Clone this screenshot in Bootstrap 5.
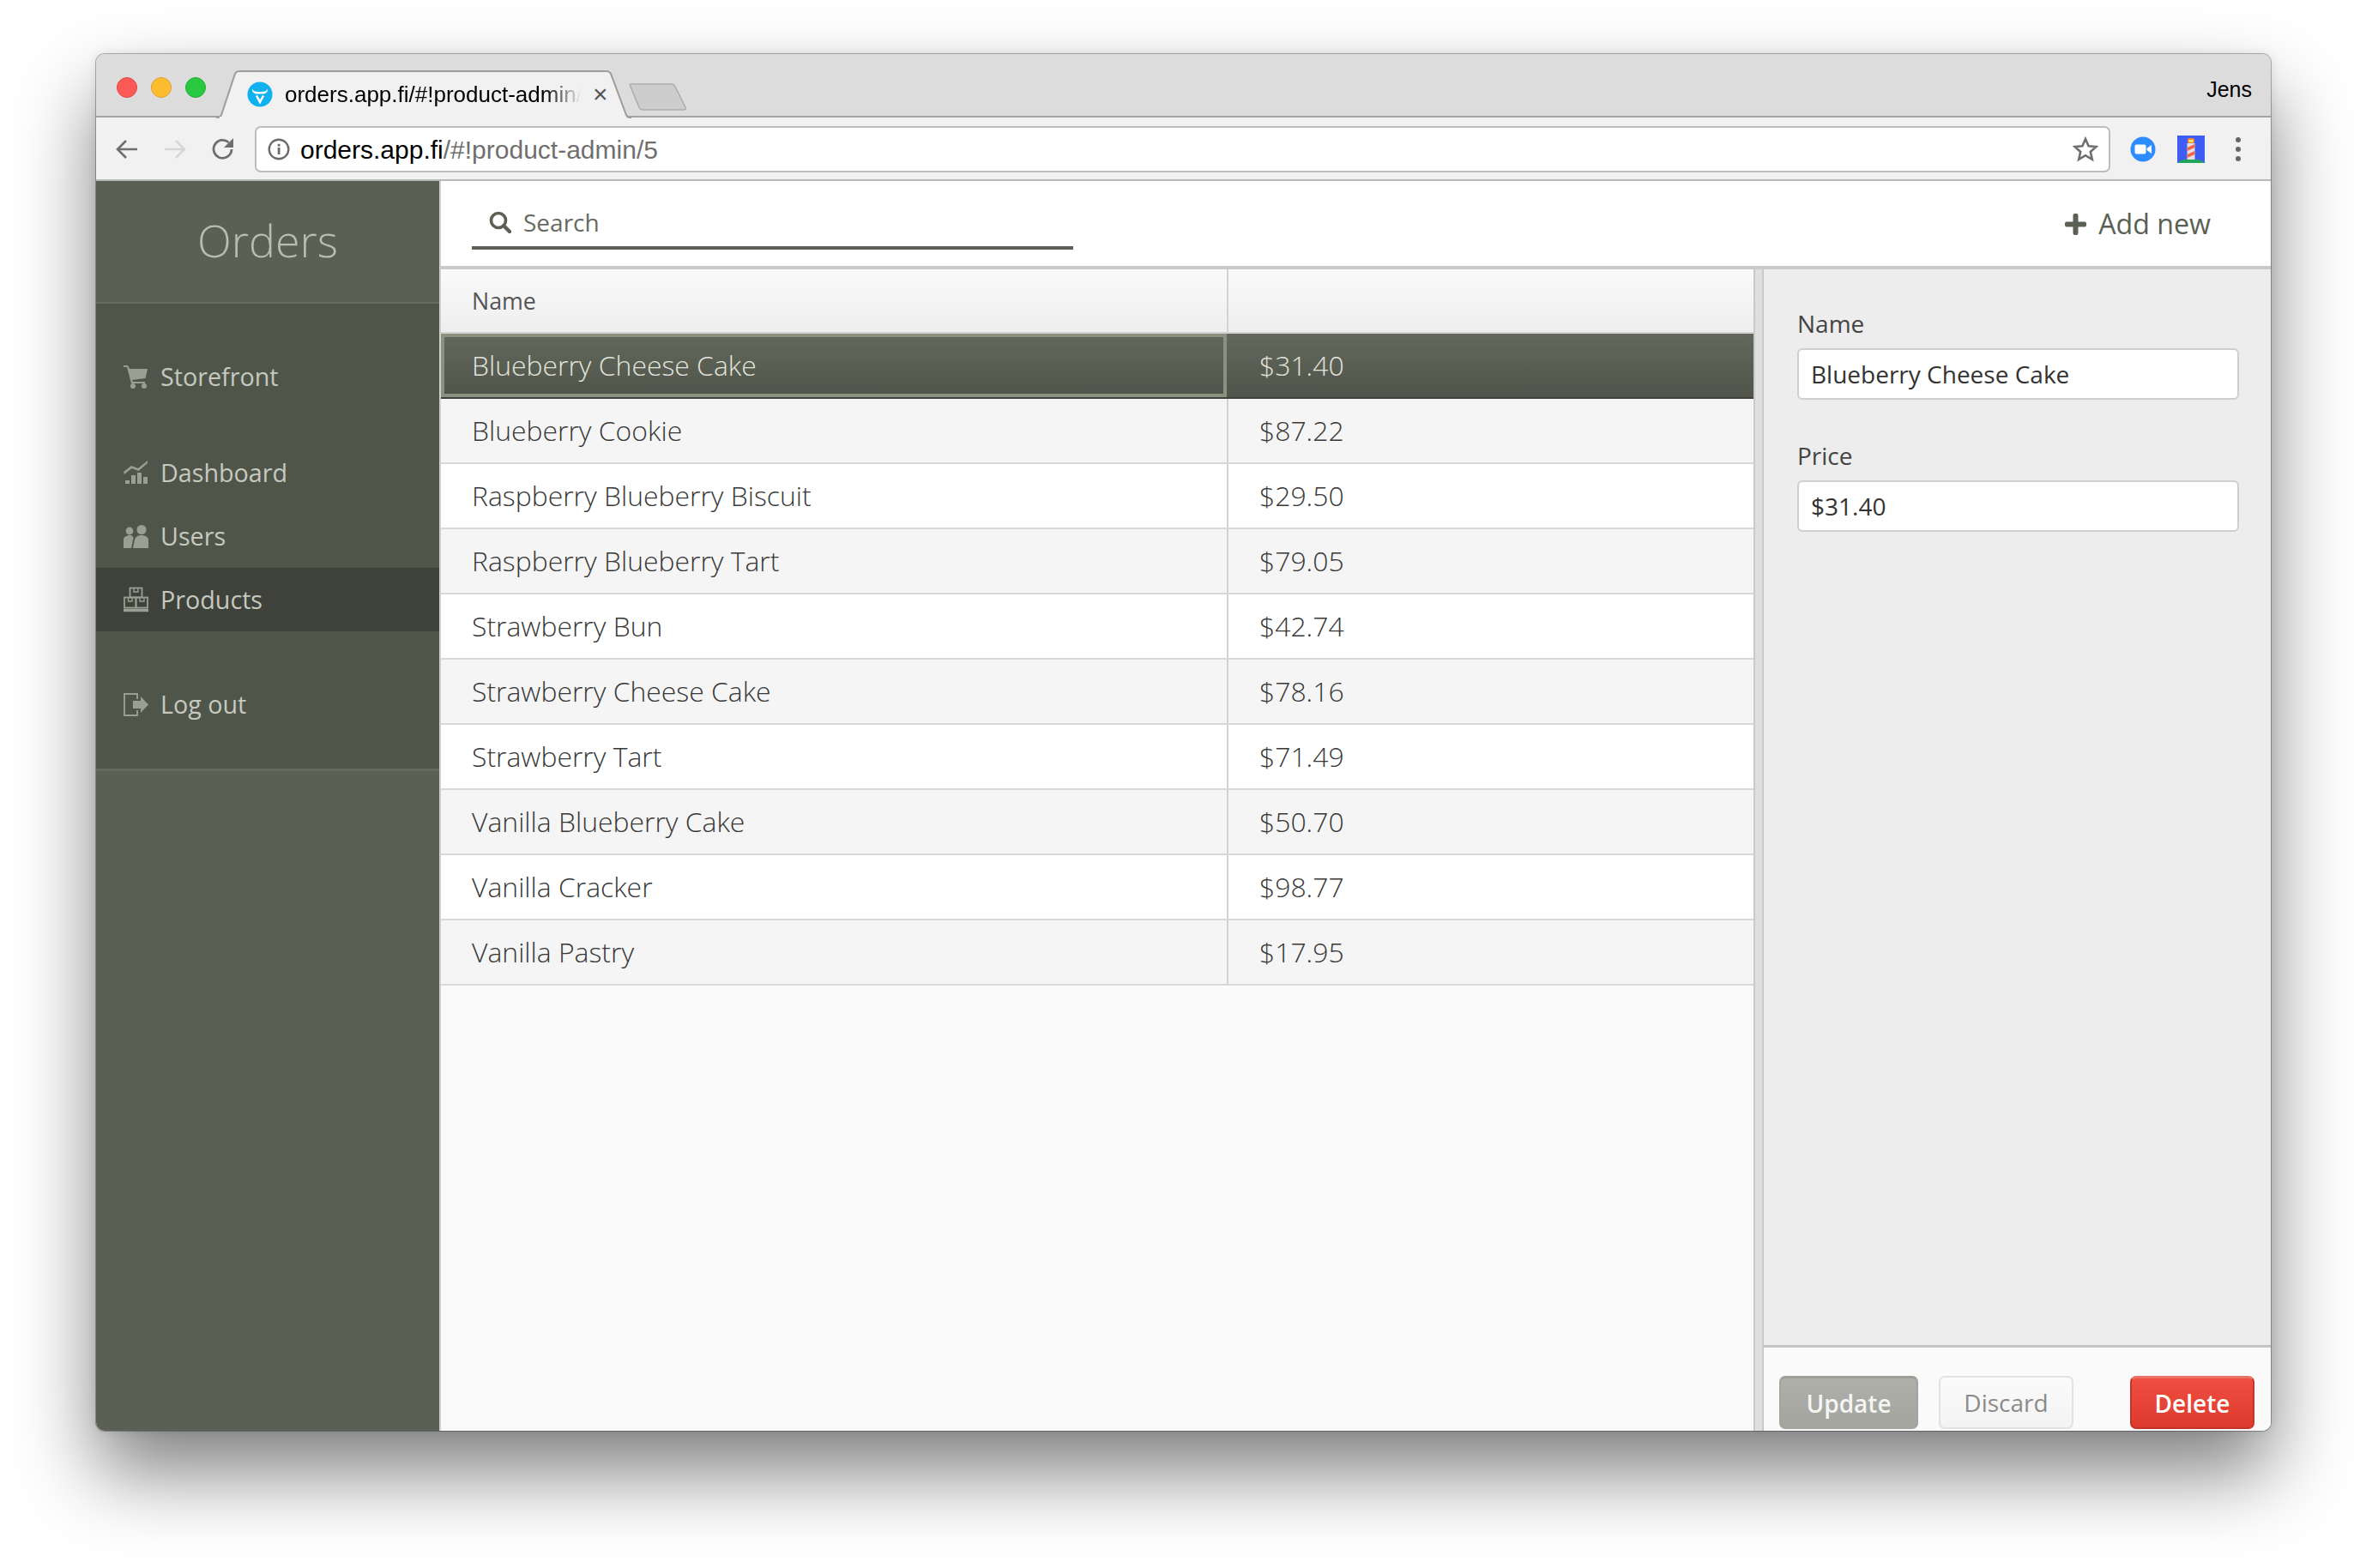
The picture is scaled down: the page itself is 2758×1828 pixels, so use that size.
<!DOCTYPE html>
<html lang="en">
<head>
<meta charset="utf-8">
<title>Orders</title>
<link rel="stylesheet" href="https://cdn.jsdelivr.net/npm/bootstrap@5.3.0/dist/css/bootstrap.min.css">
<style>
html,body{height:100%;background:#fff;overflow:hidden}
body{padding:63px 0 0 112px;font-family:"Open Sans",sans-serif}
.appwin{width:2535px;height:1605px;border-radius:10px;overflow:hidden;background:#fafafa;box-shadow:0 0 0 1px rgba(0,0,0,.28),0 0 12px rgba(0,0,0,.1),0 48px 92px rgba(0,0,0,.5)}
.chrome-font{font-family:"Liberation Sans",Arial,sans-serif}
.tabbar{height:74px;background:#dcdcdc;border-bottom:2px solid #a3a3a3;padding-left:24px}
.light{width:24px;height:24px;border-radius:50%;margin-right:16px;margin-top:5px}
.l-r{background:#fc5a56;border:1px solid #e2453f}.l-y{background:#fdbc2f;border:1px solid #e0a028}.l-g{background:#28c840;border:1px solid #22ab33}
.tabshape{position:relative;width:484px;height:56px;margin-left:12px;margin-top:22px;flex:none}
.tabshape svg{position:absolute;left:0;top:0}
.tabinner{position:relative;padding:0 0 0 36px;height:56px}
.tabtext{font-size:26px;color:#000;width:345px;margin-left:14px;white-space:nowrap;overflow:hidden;-webkit-mask-image:linear-gradient(90deg,#000 88%,transparent 100%);mask-image:linear-gradient(90deg,#000 88%,transparent 100%)}
.tabclose{font-size:30px;color:#555;margin-left:14px;line-height:1}
.newtab{margin-left:-3px;margin-top:27px;flex:none}
.usern{font-size:25px;color:#000;margin-left:auto;margin-right:22px;margin-top:11px}
.toolbar{height:74px;background:#f1f1f1;border-bottom:2px solid #b9b9b9;padding:2px 0 0 22px}
.navico{width:28px;height:28px;margin-right:28px;flex:none}
.addr{width:2163px;height:54px;background:#fff;border:2px solid #bdbdbd;border-radius:7px;margin-left:-5px;padding:0 12px 0 13px;font-size:30px;flex:none}
.addr .dom{color:#000;margin-left:12px}.addr .rest{color:#6f6f6f}
.extico{flex:none}
.appbody{height:1457px}
.sidebox{width:400px;background:#5b6055;flex:none}
.brandbox{height:143px;border-bottom:2px solid #686d5f;padding-top:34px;text-align:center;font-weight:300;font-size:52px;line-height:70px;color:#b9bcb3}
.navbox{background:#50554a;border-bottom:3px solid #656a5c;padding:48px 0 38px}
.sideitem{display:flex;align-items:center;height:74px;padding-left:32px;color:#c6c9c0;font-size:28.7px;text-decoration:none}
.sideitem:hover{color:#c6c9c0}
.sideitem svg{width:29px;height:30px;margin-right:14px;flex:none}
.sideitem.on{background:#3f423a}
.gap-a{margin-top:38px}.gap-b{margin-top:48px}
.mainbox{border-left:2px solid #cfcfcf;min-width:0}
.topstrip{height:103px;background:#fff;border-bottom:4px solid #c9c9c9;padding:0 70px 0 36px}
.searchbox{width:701px;height:62px;border-bottom:4px solid #5b6055;margin-top:-1px;padding:2px 0 0 20px;font-size:28px;color:#666b60}
.searchbox svg{margin-right:14px}
.addnew{font-size:32.2px;color:#5b6055;margin-top:2px}
.addnew svg{margin-right:14px}
.gridpane{width:1530px;flex:none;background:#fafafa}
.gridt.table{width:1530px;table-layout:fixed;margin:0;border-collapse:separate;border-spacing:0;--bs-table-bg:transparent}
.gridt.table>thead>tr>th{height:75px;padding:2px 0 0 36px;font-weight:400;font-size:26.8px;color:#555;background:linear-gradient(#fafafa,#eeeeee);border:0;border-bottom:2px solid #d3d3d3;box-shadow:none;vertical-align:middle}
.gridt.table>thead>tr>th+th{border-left:2px solid #d3d3d3}
.gridt.table>tbody>tr>td{height:76px;padding:0 0 0 36px;font-weight:300;font-size:31.9px;color:#383838;border:0;border-bottom:2px solid #d8d8d8;box-shadow:none;vertical-align:middle;background:#fff}
.gridt.table>tbody>tr>td+td{border-left:2px solid #d3d3d3}
.gridt.table>tbody>tr:nth-child(even)>td{background:#f5f5f5}
.gridt.table>tbody>tr.picked>td{background:linear-gradient(#63685c,#50544a);color:#e2e4de;border-bottom:2px solid #3f423a}
.gridt.table>tbody>tr.picked>td:first-child{box-shadow:inset 0 0 0 4px #8b917f}
.gridt.table>tbody>tr.picked>td+td{border-left:0;padding-left:38px}
.splitter{width:12px;flex:none;background:#dfdfdf;border-left:2px solid #c9c9c9;border-right:2px solid #c9c9c9}
.editpane{background:#ededed;flex:1;min-width:0}
.editform{flex:1;padding:45px 37px 0 39px;color:#444}
.flabel{font-size:28px;line-height:36px;margin-bottom:11px;color:#444}
.finput.form-control{height:60px;font-size:28px;color:#333;padding:0 14px;border:2px solid #cfcfcf;border-radius:6px;margin-bottom:47px;font-family:"Open Sans",sans-serif}
.editfoot{height:100px;background:#fafafa;border-top:3px solid #c4c4c4;padding:33px 19px 0 18px}
.pbtn.btn{height:62px;font-size:28px;line-height:1;padding:0;border-radius:7px;color:#fff}
.b-up.btn{width:162px;font-weight:600;background:linear-gradient(#adafa9,#a3a59e);border:2px solid #a2a49d;border-top:3px solid #9c9e97;opacity:1;color:#f5f5f3}
.b-di.btn{width:157px;margin-left:24px;background:linear-gradient(#fbfbfb,#f3f3f3);border:2px solid #e2e2e2;color:#8a8a8a;opacity:1}
.b-de.btn{width:145px;font-weight:600;margin-left:auto;background:linear-gradient(#f04e40,#dd3a2d);border:2px solid #c2352a;border-top:3px solid #e87268}
</style>
</head>
<body>
<div class="appwin d-flex flex-column">
  <div class="tabbar d-flex align-items-center chrome-font">
    <span class="light l-r"></span><span class="light l-y"></span><span class="light l-g" style="margin-right:0"></span>
    <div class="tabshape">
      <svg width="484" height="56" viewBox="0 0 484 56"><path d="M0 55 H2 C4 55 5 54 6 52 L22 4 C23 2 24 1 27 1 H455 C458 1 459 2 460 4 L478 52 C479 54 480 55 482 55 H484" fill="#f1f1f1" stroke="#9d9d9d" stroke-width="2"/><rect x="4" y="54" width="474" height="2" fill="#f1f1f1"/></svg>
      <div class="tabinner d-flex align-items-center">
        <svg style="position:static;flex:none" width="30" height="30" viewBox="0 0 30 30"><circle cx="15" cy="15" r="14.5" fill="#0fb1ee"/><path d="M6 8.5 C7 11 9 12 13 12 H17 C21 12 23 11 24 8.5 C24.5 12 22 14.5 18.5 14.5 H11.5 C8 14.5 5.5 12 6 8.5Z" fill="#fff"/><path d="M11 16.5 L15 24 L19 16.5" fill="none" stroke="#fff" stroke-width="2.6"/></svg>
        <span class="tabtext">orders.app.fi/#!product-admin/</span>
        <span class="tabclose">×</span>
      </div>
    </div>
    <svg class="newtab" width="68" height="34" viewBox="0 0 68 34"><path d="M3 2 H50 C52 2 53 3 54 5 L66 29 C67 31 66 32 64 32 H16 C14 32 13 31 12 29 L2 5 C1 3 1 2 3 2Z" fill="#cdcdcd" stroke="#adadad" stroke-width="1.6"/></svg>
    <span class="usern">Jens</span>
  </div>
  <div class="toolbar d-flex align-items-center chrome-font">
    <svg class="navico" viewBox="0 0 28 28"><path d="M26 14 H4 M13 4 L3 14 L13 24" fill="none" stroke="#6e6e6e" stroke-width="2.6"/></svg>
    <svg class="navico" viewBox="0 0 28 28"><path d="M2 14 H24 M15 4 L25 14 L15 24" fill="none" stroke="#d6d6d6" stroke-width="2.6"/></svg>
    <svg class="navico" viewBox="0 0 28 28"><path d="M24 14 A10.5 10.5 0 1 1 20.5 6" fill="none" stroke="#6e6e6e" stroke-width="2.8"/><path d="M26 1 V12 H15Z" fill="#6e6e6e"/></svg>
    <div class="addr d-flex align-items-center">
      <svg width="26" height="26" viewBox="0 0 26 26" style="flex:none"><circle cx="13" cy="13" r="11.3" fill="none" stroke="#6a6a6a" stroke-width="2.4"/><rect x="11.7" y="11" width="2.8" height="8" fill="#6a6a6a"/><rect x="11.7" y="6.8" width="2.8" height="2.8" fill="#6a6a6a"/></svg>
      <span class="dom">orders.app.fi</span><span class="rest">/#!product-admin/5</span>
      <svg class="ms-auto" width="30" height="30" viewBox="0 0 30 30"><path d="M15 3 L18.6 11.2 L27.5 12 L20.8 18 L22.8 26.8 L15 22.2 L7.2 26.8 L9.2 18 L2.5 12 L11.4 11.2Z" fill="none" stroke="#6e6e6e" stroke-width="2.6"/></svg>
    </div>
    <svg class="extico" style="margin-left:23px" width="30" height="30" viewBox="0 0 30 30"><circle cx="15" cy="15" r="14.5" fill="#2d8cff"/><rect x="5.5" y="9.5" width="13" height="11" rx="2" fill="#fff"/><path d="M19.5 14 L25 10 V20 L19.5 16Z" fill="#fff"/></svg>
    <svg class="extico" style="margin-left:25px" width="32" height="32" viewBox="0 0 32 32"><rect width="32" height="32" fill="#3f5cf5"/><ellipse cx="16" cy="32" rx="15" ry="4.5" fill="#1ea55a"/><rect x="11.5" y="9" width="9" height="19" fill="#e8d8e8"/><path d="M11.5 14 L20.5 10 V14 L11.5 18Z M11.5 22 L20.5 18 V22 L11.5 26Z" fill="#f0683a"/><rect x="12" y="3" width="8" height="6" rx="2" fill="#f4862a"/><rect x="13.5" y="5" width="5" height="3" fill="#fde16a"/></svg>
    <svg class="extico" style="margin-left:35px" width="8" height="30" viewBox="0 0 8 30"><circle cx="4" cy="4" r="3" fill="#666"/><circle cx="4" cy="15" r="3" fill="#666"/><circle cx="4" cy="26" r="3" fill="#666"/></svg>
  </div>
  <div class="appbody d-flex">
    <aside class="sidebox d-flex flex-column">
      <div class="brandbox">Orders</div>
      <nav class="navbox">
        <a class="sideitem" href="#"><svg viewBox="0 0 29 30" fill="#9a9f92"><path d="M0 2 H5 L7 6 H28 L25.5 17 L10 19 L11 21 H25 V23 H9 L4 4 H0Z"/><circle cx="11" cy="26" r="3"/><circle cx="24" cy="26" r="3"/></svg>Storefront</a>
        <a class="sideitem gap-a" href="#"><svg viewBox="0 0 29 30" fill="#9a9f92"><path d="M0 14 L9 7 L17 10 L28 1 V4 L17.5 13 L9.5 10 L1 17Z"/><rect x="2" y="24" width="5" height="4"/><rect x="9" y="18" width="5" height="10"/><rect x="16" y="15" width="5" height="13"/><rect x="23" y="20" width="5" height="8"/></svg>Dashboard</a>
        <a class="sideitem" href="#"><svg viewBox="0 0 29 30" fill="#9a9f92"><circle cx="7" cy="9" r="4.4"/><path d="M0 29 V19 C0 16 3 15 6 14 H9.5 L11.5 17 L9 29Z"/><circle cx="21" cy="7.5" r="5.6"/><path d="M11 29 L13 19 C14 16 16 15 19 14 H23 C26 15 29 16 29 20 V29Z"/></svg>Users</a>
        <a class="sideitem on" href="#"><svg viewBox="0 0 29 30" fill="none" stroke="#9a9f92" stroke-width="1.8"><rect x="7.5" y="1.5" width="14" height="11"/><rect x="1" y="12.5" width="13.5" height="12"/><rect x="14.5" y="12.5" width="13.5" height="12"/><path d="M12 2 V6 H17 V2 M5.5 13 V17 H10 V13 M19 13 V17 H24 V13" stroke-width="1.4"/><path d="M0 27.5 H29" stroke-width="3.5"/></svg>Products</a>
        <a class="sideitem gap-b" href="#"><svg viewBox="0 0 29 30" fill="none" stroke="#9a9f92" stroke-width="1.9"><path d="M16 9 V3 H1 V28 H16 V22"/><path d="M11 11 H20 V6 L29 15.5 L20 25 V20 H11Z" fill="#9a9f92" stroke="none"/></svg>Log out</a>
      </nav>
    </aside>
    <main class="mainbox flex-grow-1 d-flex flex-column">
      <div class="topstrip d-flex align-items-center justify-content-between">
        <div class="searchbox d-flex align-items-center">
          <svg width="26" height="26" viewBox="0 0 26 26"><circle cx="11" cy="11" r="8.5" fill="none" stroke="#5b6055" stroke-width="3.6"/><path d="M17 17 L24 24" stroke="#5b6055" stroke-width="4.4" stroke-linecap="round"/></svg>Search
        </div>
        <div class="addnew d-flex align-items-center">
          <svg width="25" height="25" viewBox="0 0 25 25"><path d="M9.5 2 Q9.5 0 11.5 0 H13.5 Q15.5 0 15.5 2 V9.5 H23 Q25 9.5 25 11.5 V13.5 Q25 15.5 23 15.5 H15.5 V23 Q15.5 25 13.5 25 H11.5 Q9.5 25 9.5 23 V15.5 H2 Q0 15.5 0 13.5 V11.5 Q0 9.5 2 9.5 H9.5Z" fill="#5b6055"/></svg>Add new
        </div>
      </div>
      <div class="d-flex flex-grow-1" style="min-height:0">
        <div class="gridpane">
          <table class="table gridt">
            <colgroup><col style="width:916px"><col></colgroup>
            <thead><tr><th>Name</th><th></th></tr></thead>
            <tbody>
              <tr class="picked"><td>Blueberry Cheese Cake</td><td>$31.40</td></tr>
              <tr><td>Blueberry Cookie</td><td>$87.22</td></tr>
              <tr><td>Raspberry Blueberry Biscuit</td><td>$29.50</td></tr>
              <tr><td>Raspberry Blueberry Tart</td><td>$79.05</td></tr>
              <tr><td>Strawberry Bun</td><td>$42.74</td></tr>
              <tr><td>Strawberry Cheese Cake</td><td>$78.16</td></tr>
              <tr><td>Strawberry Tart</td><td>$71.49</td></tr>
              <tr><td>Vanilla Blueberry Cake</td><td>$50.70</td></tr>
              <tr><td>Vanilla Cracker</td><td>$98.77</td></tr>
              <tr><td>Vanilla Pastry</td><td>$17.95</td></tr>
            </tbody>
          </table>
        </div>
        <div class="splitter"></div>
        <div class="editpane d-flex flex-column">
          <form class="editform">
            <label class="flabel d-block" for="fname">Name</label>
            <input class="form-control finput" id="fname" value="Blueberry Cheese Cake">
            <label class="flabel d-block" for="fprice">Price</label>
            <input class="form-control finput" id="fprice" value="$31.40">
          </form>
          <div class="editfoot d-flex align-items-start">
            <button class="btn pbtn b-up" type="button">Update</button>
            <button class="btn pbtn b-di" type="button">Discard</button>
            <button class="btn pbtn b-de" type="button">Delete</button>
          </div>
        </div>
      </div>
    </main>
  </div>
</div>
<script src="https://cdn.jsdelivr.net/npm/bootstrap@5.3.0/dist/js/bootstrap.bundle.min.js"></script>
</body>
</html>
